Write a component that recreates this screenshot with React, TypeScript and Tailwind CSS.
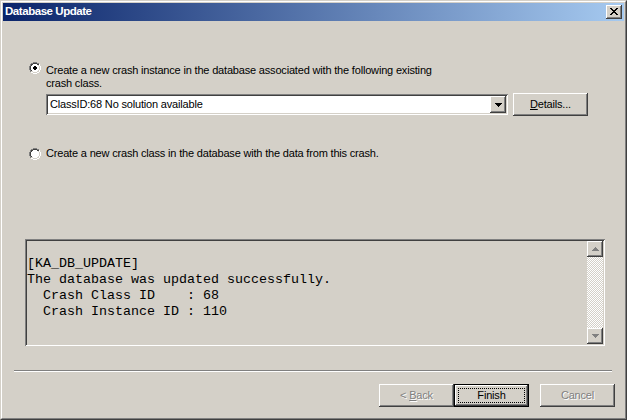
import React from 'react'

const raised =
  'shadow-[inset_-1px_-1px_#404040,inset_1px_1px_#ffffff,inset_-2px_-2px_#808080,inset_2px_2px_#d4d0c8]'
const sunken =
  'shadow-[inset_1px_1px_#808080,inset_-1px_-1px_#ffffff,inset_2px_2px_#404040,inset_-2px_-2px_#d4d0c8]'

function Radio({ checked }: { checked?: boolean }) {
  return (
    <svg width="12" height="12" viewBox="0 0 12 12" className="shrink-0" shapeRendering="crispEdges">
      {/* outer ring: grey top-left, white bottom-right */}
      <path d="M4 0h4v1H4zM2 1h2v1H2zM8 1h2v1H8zM1 2h1v2H1zM0 4h1v4H0zM1 8h1v2H1z" fill="#808080" />
      <path d="M10 2h1v2h-1zM11 4h1v4h-1zM10 8h1v2h-1zM8 10h2v1H8zM2 10h2v1H2zM4 11h4v1H4z" fill="#ffffff" />
      {/* inner ring */}
      <path d="M4 1h4v1H4zM2 2h2v1H2zM8 2h2v1H8zM2 3h1v1H2zM1 4h1v4H1zM2 8h1v1H2z" fill="#404040" />
      <path d="M9 3h1v1H9zM10 4h1v4h-1zM9 8h1v1H9zM8 9h2v1H8zM2 9h2v1H2zM4 10h4v1H4z" fill="#d4d0c8" />
      <path d="M4 2h4v1H4zM3 3h6v1H3zM2 4h8v4H2zM3 8h6v1H3zM4 9h4v1H4z" fill="#ffffff" />
      {checked && <path d="M5 4h2v1H5zM4 5h4v2H4zM5 7h2v1H5z" fill="#000000" />}
    </svg>
  )
}

function Arrow({ dir, color = '#000000' }: { dir: 'up' | 'down'; color?: string }) {
  const d = dir === 'down' ? 'M0 0h7v1H0zM1 1h5v1H1zM2 2h3v1H2zM3 3h1v1H3z' : 'M3 0h1v1H3zM2 1h3v1H2zM1 2h5v1H1zM0 3h7v1H0z'
  return (
    <svg width="7" height="4" viewBox="0 0 7 4" shapeRendering="crispEdges">
      <path d={d} fill={color} />
    </svg>
  )
}

function Button({
  children,
  disabled,
  isDefault,
}: {
  children: React.ReactNode
  disabled?: boolean
  isDefault?: boolean
}) {
  if (isDefault) {
    return (
      <div className="w-[75px] h-[23px] border border-black bg-[#d4d0c8]">
        <div className={`w-full h-full p-[3px] ${raised}`}>
          <div className="w-full h-full border border-dotted border-black flex items-center justify-center">
            {children}
          </div>
        </div>
      </div>
    )
  }
  return (
    <div
      className={`w-[75px] h-[23px] bg-[#d4d0c8] flex items-center justify-center ${raised} ${
        disabled ? 'text-[#808080] [text-shadow:1px_1px_#ffffff]' : 'text-black'
      }`}
    >
      {children}
    </div>
  )
}

const output = `[KA_DB_UPDATE]
The database was updated successfully.
  Crash Class ID    : 68
  Crash Instance ID : 110`

export default function App() {
  return (
    <div className="w-[627px] h-[420px] bg-[#d4d0c8] border border-t-[#d4d0c8] border-l-[#d4d0c8] border-r-[#404040] border-b-[#404040] font-['Liberation_Sans',Arial,sans-serif] text-[11px] tracking-[-0.18px] text-black">
      <div className="w-full h-full border border-t-white border-l-white border-r-[#808080] border-b-[#808080] p-px flex flex-col">
        {/* Title bar */}
        <div className="h-[18px] shrink-0 flex items-center justify-between pl-[2px] pr-[2px] bg-[linear-gradient(to_right,#0a246a,#a6caf0)]">
          <span className="text-white font-bold text-[11.5px] tracking-[-0.45px] leading-none">Database Update</span>
          <div className={`w-[16px] h-[14px] bg-[#d4d0c8] flex items-center justify-center ${raised}`}>
            <svg width="8" height="7" viewBox="0 0 8 7" shapeRendering="crispEdges" className="-mt-px">
              <path
                d="M0 0h2v1H0zM6 0h2v1H6zM1 1h2v1H1zM5 1h2v1H5zM2 2h4v1H2zM3 3h2v1H3zM2 4h4v1H2zM1 5h2v1H1zM5 5h2v1H5zM0 6h2v1H0zM6 6h2v1H6z"
                fill="#000000"
              />
            </svg>
          </div>
        </div>

        {/* Body */}
        <div className="flex flex-col">
          <div className="mt-[41px] ml-[26px] flex items-start gap-[5px]">
            <Radio checked />
            <div className="leading-[13px] mt-[2px]">
              Create a new crash instance in the database associated with the following existing
              <br />
              crash class.
            </div>
          </div>

          <div className="mt-[3px] ml-[43px] flex items-center gap-[5px] h-[23px]">
            <div className={`w-[462px] h-[21px] bg-white p-[2px] flex items-center ${sunken}`}>
              <div className="flex-1 pl-[2px] leading-none">ClassID:68 No solution available</div>
              <div className={`w-[16px] h-[17px] bg-[#d4d0c8] flex items-center justify-center ${raised}`}>
                <Arrow dir="down" />
              </div>
            </div>
            <Button>
              <span>
                <span className="underline">D</span>etails...
              </span>
            </Button>
          </div>

          <div className="mt-[31px] ml-[26px] flex items-center gap-[5px]">
            <Radio />
            <div className="leading-[13px]">
              Create a new crash class in the database with the data from this crash.
            </div>
          </div>

          <div className={`mt-[79px] ml-[22px] w-[580px] h-[107px] p-[2px] flex ${sunken}`}>
            <pre className="flex-1 pt-[15px] font-['Liberation_Mono','Courier_New',monospace] text-[13.33px] tracking-normal leading-[16px] overflow-hidden">
              {output}
            </pre>
            <div className="w-[16px] flex flex-col">
              <div className={`w-[16px] h-[16px] bg-[#d4d0c8] flex items-center justify-center ${raised}`}>
                <Arrow dir="up" color="#808080" />
              </div>
              <div className="flex-1 bg-[repeating-conic-gradient(#d4d0c8_0%_25%,#ffffff_0%_50%)] bg-[length:2px_2px]" />
              <div className={`w-[16px] h-[16px] bg-[#d4d0c8] flex items-center justify-center ${raised}`}>
                <Arrow dir="down" color="#808080" />
              </div>
            </div>
          </div>

          <div className="mt-[24px] ml-[11px] w-[598px] h-[2px] border-t border-t-[#808080] border-b border-b-white" />

          <div className="mt-[12px] ml-[376px] flex">
            <Button disabled>
              <span>
                &lt; <span className="underline">B</span>ack
              </span>
            </Button>
            <Button isDefault>Finish</Button>
            <div className="ml-[11px]">
              <Button disabled>Cancel</Button>
            </div>
          </div>
        </div>
      </div>
    </div>
  )
}
